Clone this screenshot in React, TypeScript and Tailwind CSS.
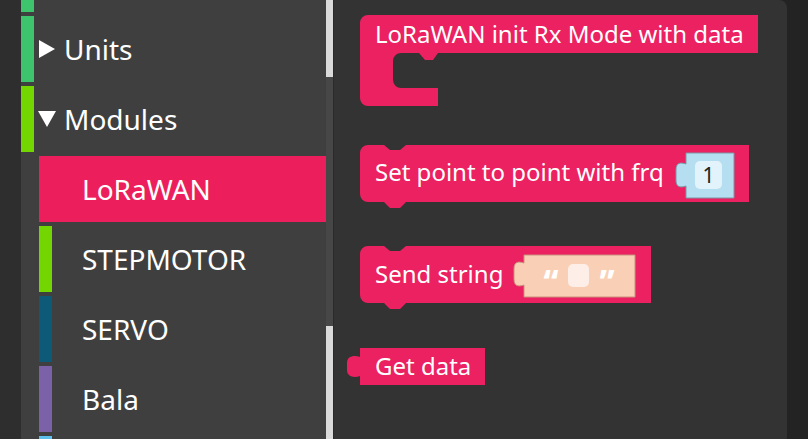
import React from 'react';

const PINK = '#ec2161';

function Tri({ down }: { down?: boolean }) {
  return (
    <svg width="18" height="18" viewBox="0 0 18 18" className="shrink-0">
      {down ? <polygon points="0,1 18,1 9,17" fill="#fff" /> : <polygon points="1,0 17,9 1,18" fill="#fff" />}
    </svg>
  );
}

function TopRow({ color, label, open }: { color: string; label: string; open?: boolean }) {
  return (
    <div className="flex h-[66px] shrink-0 items-center">
      <div className="h-full w-[13px]" style={{ background: color }} />
      <div className="ml-[4px] mr-[8px]">
        <Tri down={open} />
      </div>
      <span className="text-[28px] text-white">{label}</span>
    </div>
  );
}

function SubRow({ color, label, active }: { color: string; label: string; active?: boolean }) {
  if (active) {
    return (
      <div className="ml-[18px] flex h-[66px] shrink-0 items-center bg-[#ec1f5c] pl-[43px]">
        <span className="text-[28px] text-white">{label}</span>
      </div>
    );
  }
  return (
    <div className="ml-[18px] flex h-[66px] shrink-0 items-center">
      <div className="h-full w-[13px]" style={{ background: color }} />
      <span className="ml-[30px] text-[28px] text-white">{label}</span>
    </div>
  );
}

function Blocks() {
  const t = { fontFamily: '"Noto Sans", sans-serif', fontSize: 24, fill: '#fff' };
  const q = { fontFamily: '"Noto Sans", sans-serif', fontSize: 32, fontWeight: 800, fill: '#fff' };
  return (
    <svg width="454" height="439" viewBox="333 0 454 439" className="absolute left-0 top-0">
      {/* LoRaWAN init Rx Mode with data */}
      <path
        d="M359,23 a8,8 0 0 1 8,-8 H757 V53 H437 L432,60 H424 L418,53 H400 a8,8 0 0 0 -8,8 V80 a8,8 0 0 0 8,8 H437 V106 H367 a8,8 0 0 1 -8,-8 Z"
        fill={PINK}
      />
      <text x="374" y="43" style={t}>LoRaWAN init Rx Mode with data</text>

      {/* Set point to point with frq */}
      <path
        d="M359,153 a8,8 0 0 1 8,-8 H383 l6,5 h10 l6,-5 H748 V202 H405 l-6,6 h-10 l-6,-6 H367 a8,8 0 0 1 -8,-8 Z"
        fill={PINK}
      />
      <text x="374" y="181" style={t}>Set point to point with frq</text>
      <path
        d="M685,153 H733 V198 H685 V186 c-6,2 -10,1 -10,-6 v-10 c0,-7 4,-8 10,-6 Z"
        fill="#b5dff1"
        stroke="#7b98a6"
        strokeWidth="1"
      />
      <rect x="694" y="161" width="27" height="28" rx="5" fill="#e3f3fb" />
      <text x="707.5" y="183" textAnchor="middle" style={{ ...t, fill: '#222', fontSize: 21 }}>1</text>

      {/* Send string */}
      <path
        d="M359,254 a8,8 0 0 1 8,-8 H383 l6,5 h10 l6,-5 H650 V303 H405 l-6,6 h-10 l-6,-6 H367 a8,8 0 0 1 -8,-8 Z"
        fill={PINK}
      />
      <text x="374" y="283" style={t}>Send string</text>
      <path
        d="M523,255 H634 V297 H523 V285 c-6,2 -10,1 -10,-6 v-10 c0,-7 4,-8 10,-6 Z"
        fill="#f9d0b6"
        stroke="#c9917c"
        strokeWidth="1"
      />
      <text x="550" y="293" textAnchor="middle" style={q}>“</text>
      <rect x="567" y="264" width="21" height="23" rx="5" fill="#fdeee8" />
      <text x="606" y="293" textAnchor="middle" style={q}>”</text>

      {/* Get data */}
      <path
        d="M359,348 H484 V385 H359 V376 c-6,2 -13,1 -13,-6 v-7 c0,-7 7,-8 13,-6 Z"
        fill={PINK}
      />
      <text x="374" y="375" style={t}>Get data</text>
    </svg>
  );
}

export default function App() {
  return (
    <div className="flex h-[439px] w-[808px] overflow-hidden bg-[#232323]" style={{ fontFamily: '"Noto Sans", sans-serif' }}>
      <div className="w-[21px] shrink-0 bg-[#2e2e2e]" />
      <div className="flex w-[305px] shrink-0 flex-col gap-[4px] bg-[#3f3f3f]">
        <div className="h-[12px] w-[13px] shrink-0 bg-[#3ec46d]" />
        <TopRow color="#3ec46d" label="Units" />
        <TopRow color="#74d600" label="Modules" open />
        <SubRow color={PINK} label="LoRaWAN" active />
        <SubRow color="#74d600" label="STEPMOTOR" />
        <SubRow color="#0d5a78" label="SERVO" />
        <SubRow color="#7b62a8" label="Bala" />
        <div className="ml-[18px] h-[66px] w-[13px] shrink-0 bg-[#5bc0eb]" />
      </div>
      <div className="flex w-[7px] shrink-0 flex-col">
        <div className="h-[77px] bg-[#dadada]" />
        <div className="flex-1 bg-[#474747]" />
        <div className="h-[113px] bg-[#dadada]" />
      </div>
      <div className="relative w-[454px] shrink-0 rounded-tr-[8px] border-l border-[#2a2a2a] bg-[#333333]">
        <Blocks />
      </div>
      <div className="flex-1 bg-[#232323]" />
    </div>
  );
}
